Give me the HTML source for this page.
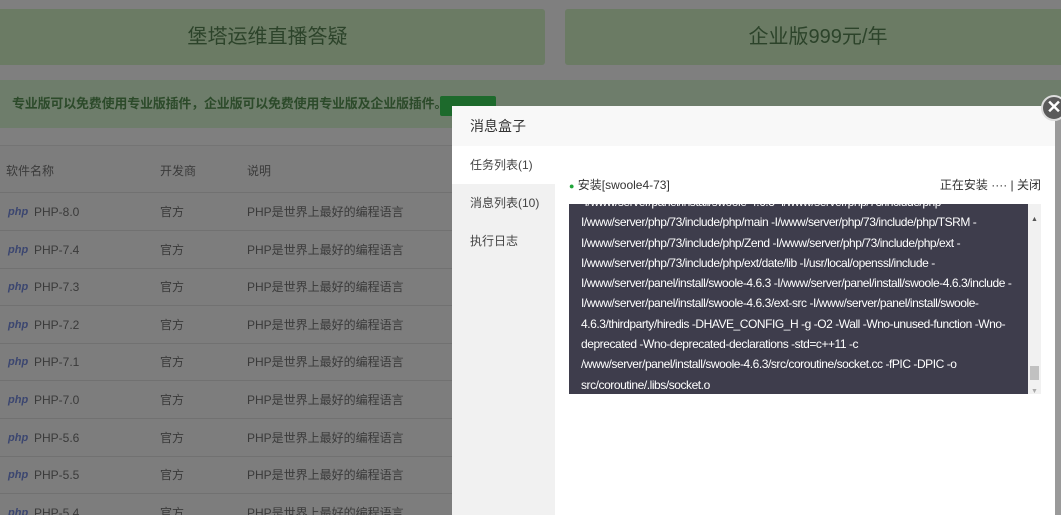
<!DOCTYPE html>
<html><head><meta charset="utf-8"><style>
*{margin:0;padding:0;box-sizing:border-box}
html,body{width:1061px;height:515px;overflow:hidden}
body{background:#7f7f7f;font-family:"Liberation Sans","Noto Sans CJK SC",sans-serif;position:relative}
.box{position:absolute;top:9px;height:56px;background:#6b7b64;border-radius:3px;color:#2c432a;font-size:20px;text-align:center;line-height:56px}
.bar{position:absolute;left:0;top:80px;width:1061px;height:48px;background:#6e7d6b;color:#2c4a2a;font-size:13px;font-weight:bold;line-height:48px;padding-left:12px;letter-spacing:-0.2px}
.btn{position:absolute;left:440px;top:96px;width:56px;height:20px;background:#1d6a2c;border-radius:2px}
.tbl{position:absolute;left:0;top:145px;width:1061px;height:370px;background:#7d7d7d;border-top:1px solid #747474}
.row{position:absolute;left:0;width:1061px;height:38px;border-bottom:1px solid #717171;font-size:12px;color:#3a3a3a;line-height:38px}
.row span{position:absolute}
.php{font-style:italic;font-weight:bold;color:#3b4670;font-size:11px}
.modal{position:absolute;left:452px;top:106px;width:603px;height:409px;background:#fff;overflow:hidden}
.mh{height:40px;background:#f8f8f8;font-size:14px;color:#333;line-height:40px;padding-left:18px}
.side{position:absolute;left:0;top:40px;width:103px;height:380px;background:#f1f1f1}
.side div{height:38px;line-height:38px;padding-left:18px;font-size:12px;color:#444}
.side .act{background:#fff}
.con{position:absolute;left:117px;top:98px;width:472px;height:190px;background:#3e3d4c;color:#fff;font-size:12px;line-height:20.3px;overflow:hidden;white-space:nowrap;letter-spacing:-0.45px}
.sb{position:absolute;right:0;top:0;width:13px;height:190px;background:#f1f1f1}
</style></head><body>
<div class="box" style="left:-10px;width:555px">堡塔运维直播答疑</div>
<div class="box" style="left:565px;width:506px">企业版999元/年</div>
<div class="bar">专业版可以免费使用专业版插件，企业版可以免费使用专业版及企业版插件。</div>
<div class="btn"></div>
<div class="tbl">
<div class="row" style="top:3px;height:44px;line-height:44px"><span style="left:6px">软件名称</span><span style="left:160px">开发商</span><span style="left:247px">说明</span></div>
<div class="row" style="top:47px"><span style="left:8px" class="php">php</span><span style="left:34px">PHP-8.0</span><span style="left:160px">官方</span><span style="left:247px">PHP是世界上最好的编程语言</span></div>
<div class="row" style="top:85px"><span style="left:8px" class="php">php</span><span style="left:34px">PHP-7.4</span><span style="left:160px">官方</span><span style="left:247px">PHP是世界上最好的编程语言</span></div>
<div class="row" style="top:122px"><span style="left:8px" class="php">php</span><span style="left:34px">PHP-7.3</span><span style="left:160px">官方</span><span style="left:247px">PHP是世界上最好的编程语言</span></div>
<div class="row" style="top:160px"><span style="left:8px" class="php">php</span><span style="left:34px">PHP-7.2</span><span style="left:160px">官方</span><span style="left:247px">PHP是世界上最好的编程语言</span></div>
<div class="row" style="top:197px"><span style="left:8px" class="php">php</span><span style="left:34px">PHP-7.1</span><span style="left:160px">官方</span><span style="left:247px">PHP是世界上最好的编程语言</span></div>
<div class="row" style="top:235px"><span style="left:8px" class="php">php</span><span style="left:34px">PHP-7.0</span><span style="left:160px">官方</span><span style="left:247px">PHP是世界上最好的编程语言</span></div>
<div class="row" style="top:273px"><span style="left:8px" class="php">php</span><span style="left:34px">PHP-5.6</span><span style="left:160px">官方</span><span style="left:247px">PHP是世界上最好的编程语言</span></div>
<div class="row" style="top:310px"><span style="left:8px" class="php">php</span><span style="left:34px">PHP-5.5</span><span style="left:160px">官方</span><span style="left:247px">PHP是世界上最好的编程语言</span></div>
<div class="row" style="top:348px"><span style="left:8px" class="php">php</span><span style="left:34px">PHP-5.4</span><span style="left:160px">官方</span><span style="left:247px">PHP是世界上最好的编程语言</span></div>
</div>
<div class="modal">
<div class="mh">消息盒子</div>
<div class="side"><div class="act">任务列表(1)</div><div>消息列表(10)</div><div>执行日志</div></div>
<div style="position:absolute;left:117px;top:70px;font-size:12px;color:#333"><span style="color:#20a53a;font-size:9px">●</span> 安装[swoole4-73]</div>
<div style="position:absolute;right:14px;top:70px;font-size:12px;color:#333">正在安装 ···· | 关闭</div>
<div class="con"><div style="padding-left:12px;margin-top:-12px">
<div>-I/www/server/panel/install/swoole-4.6.3 -I/www/server/php/73/include/php</div>
<div>I/www/server/php/73/include/php/main -I/www/server/php/73/include/php/TSRM -</div>
<div>I/www/server/php/73/include/php/Zend -I/www/server/php/73/include/php/ext -</div>
<div>I/www/server/php/73/include/php/ext/date/lib -I/usr/local/openssl/include -</div>
<div>I/www/server/panel/install/swoole-4.6.3 -I/www/server/panel/install/swoole-4.6.3/include -</div>
<div>I/www/server/panel/install/swoole-4.6.3/ext-src -I/www/server/panel/install/swoole-</div>
<div>4.6.3/thirdparty/hiredis -DHAVE_CONFIG_H -g -O2 -Wall -Wno-unused-function -Wno-</div>
<div>deprecated -Wno-deprecated-declarations -std=c++11 -c</div>
<div>/www/server/panel/install/swoole-4.6.3/src/coroutine/socket.cc -fPIC -DPIC -o</div>
<div>src/coroutine/.libs/socket.o</div>
</div><div class="sb"><div style="position:absolute;left:2px;top:162px;width:9px;height:14px;background:#c1c1c1"></div><div style="position:absolute;left:3px;top:6px;font-size:7px;color:#555">▲</div><div style="position:absolute;left:3px;top:178px;font-size:7px;color:#aaa">▼</div></div></div>
</div>
<div style="position:absolute;left:1055px;top:118px;width:6px;height:400px;background:#9a9a9a"></div>
<div style="position:absolute;left:1041px;top:95px;width:26px;height:26px;border-radius:50%;background:#5a5a5a;border:2px solid #ddd;color:#fff;font-size:18px;font-weight:bold;line-height:21px;text-align:center">✕</div>
</body></html>
